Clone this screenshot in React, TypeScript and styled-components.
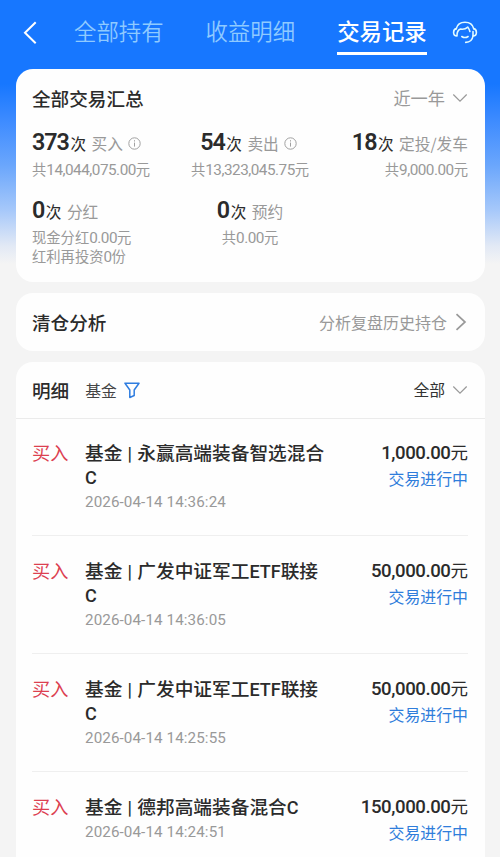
import React from "react";
import styled, { createGlobalStyle } from "styled-components";

const GlobalStyle = createGlobalStyle`
  * { box-sizing: border-box; }
  body { margin: 0; background: #f4f4f4; font-family: "Noto Sans CJK SC", sans-serif; color: #2b2b2b; }
`;

const Page = styled.div`
  width: 500px;
  height: 857px;
  overflow: hidden;
  display: flex;
  flex-direction: column;
  background: linear-gradient(180deg, #1777ff 0, #1777ff 84px, #3f8cff 122px, #6aa6fc 165px, #a6c8fa 210px, #e2e9f5 246px, #f4f4f4 264px, #f4f4f4 100%);
`;

const TopBar = styled.header`
  height: 69px;
  flex: none;
  display: flex;
  align-items: flex-start;
  padding: 13px 0 0 23px;
  svg { flex: none; }
`;

const BackIcon = styled.svg`
  width: 14px;
  height: 24px;
  margin-top: 8px;
`;

const Tabs = styled.nav`
  display: flex;
  margin-left: 37px;
  gap: 41.6px;
`;

const Tab = styled.div<{ $active?: boolean }>`
  width: 90px;
  height: 42px;
  font-size: 22.4px;
  line-height: 34px;
  white-space: nowrap;
  font-weight: ${(p) => (p.$active ? 500 : 350)};
  color: ${(p) => (p.$active ? "#fff" : "#8fcaff")};
  border-bottom: 3px solid ${(p) => (p.$active ? "#fff" : "transparent")};
`;

const ServiceIcon = styled.svg`
  width: 26px;
  height: 26px;
  margin: 6px 0 0 25px;
`;

const Card = styled.section<{ $h?: number }>`
  width: 469px;
  height: ${(p) => (p.$h ? `${p.$h}px` : "auto")};
  flex: none;
  margin: 0 0 11px 16px;
  border-radius: 17px;
  background: #fefefe;
`;

const CardHead = styled.div<{ $h: number }>`
  height: ${(p) => p.$h}px;
  padding: 0 17px 0 16px;
  display: flex;
  align-items: center;
`;

const Title = styled.h2`
  margin: 0;
  font-size: 18.6px;
  line-height: 28px;
  font-weight: 500;
`;

const HeadLink = styled.div<{ $dark?: boolean; $size: number }>`
  margin-left: auto;
  display: flex;
  align-items: center;
  gap: 7px;
  font-size: ${(p) => p.$size}px;
  line-height: 24px;
  color: ${(p) => (p.$dark ? "#333" : "#999")};
`;

const StatGrid = styled.div`
  display: grid;
  grid-template-columns: 145px 146px 145px;
  padding: 0 17px 0 16px;
  row-gap: 15px;
`;

const Stat = styled.div<{ $align: string }>`
  display: flex;
  flex-direction: column;
  align-items: ${(p) => p.$align};
  white-space: nowrap;
`;

const StatLine = styled.div<{ $info?: boolean; $centered?: boolean }>`
  height: 33px;
  line-height: 33px;
  display: flex;
  align-items: baseline;
  margin-right: ${(p) => (p.$info && p.$centered ? "3px" : "0")};
`;

const Count = styled.span`
  font: 600 23.3px/33px Roboto, sans-serif;
  letter-spacing: -1px;
  margin-right: 1.5px;
`;

const Unit = styled.span`
  font-size: 15.6px;
`;

const StatName = styled.span`
  font-size: 15.7px;
  color: #999;
  margin-left: 5.5px;
`;

const Info = styled.svg`
  width: 13px;
  height: 13px;
  margin-left: 5px;
  align-self: center;
  position: relative;
  top: 1px;
`;

const Sub = styled.div`
  font-size: 14.3px;
  line-height: 19.5px;
  color: #999;
`;

const Digits = styled.span`
  font-family: Roboto, sans-serif;
  font-size: 15.3px;
  line-height: 0;
  letter-spacing: -0.5px;
`;

const FilterButton = styled.div`
  display: flex;
  align-items: center;
  gap: 7px;
  margin-left: 16px;
  font-size: 15.8px;
  color: #444;
`;

const List = styled.div`
  border-top: 1px solid #ebebeb;
  padding: 0 17px 0 16px;
`;

const Row = styled.article`
  height: 118px;
  padding-top: 21px;
  display: flex;
  border-bottom: 1px solid #efefef;
  &:first-child {
    height: 117px;
    padding-top: 20px;
  }
`;

const Kind = styled.div`
  width: 53px;
  font-size: 18.2px;
  line-height: 26px;
  color: #dc4050;
`;

const Detail = styled.div`
  width: 270px;
`;

const Name = styled.div`
  font-size: 18.7px;
  line-height: 24px;
  padding-top: 1px;
  font-weight: 500;
  white-space: nowrap;
`;

const Latin = styled.span`
  font-family: Roboto, sans-serif;
  font-size: 18px;
  line-height: 0;
`;

const Bar = styled(Latin)`
  margin: 0 1px;
`;

const Time = styled.div`
  font: 400 15.2px/24px Roboto, sans-serif;
  color: #999;
  padding-top: 2px;
  letter-spacing: 0.1px;
  white-space: nowrap;
`;

const Money = styled.div`
  margin-left: auto;
  text-align: right;
  white-space: nowrap;
`;

const Amount = styled.div`
  font-size: 17.5px;
  line-height: 26px;
`;

const AmountDigits = styled.span`
  font-family: Roboto, sans-serif;
  font-weight: 500;
  font-size: 18.6px;
  line-height: 0;
  letter-spacing: -0.42px;
`;

const Status = styled.div`
  font-size: 15.9px;
  line-height: 26px;
  padding-top: 1px;
  color: #2f7ddb;
`;

const ChevronDown = () => (
  <svg width="16" height="10" viewBox="0 0 16 10" fill="none" stroke="#999" strokeWidth="1.2">
    <path d="M1.3 1.5 8 8.2l6.7-6.7" />
  </svg>
);

const InfoMark = () => (
  <Info viewBox="0 0 13 13" fill="none" stroke="#a0a0a0">
    <circle cx="6.5" cy="6.5" r="5.7" />
    <path d="M6.5 5.6v4M6.5 3.2v1.3" />
  </Info>
);

type StatData = {
  count: string;
  name: string;
  info?: boolean;
  align: string;
  subs: [string, string, string][];
};

const stats: StatData[] = [
  { count: "373", name: "买入", info: true, align: "flex-start", subs: [["共", "14,044,075.00", "元"]] },
  { count: "54", name: "卖出", info: true, align: "center", subs: [["共", "13,323,045.75", "元"]] },
  { count: "18", name: "定投/发车", align: "flex-end", subs: [["共", "9,000.00", "元"]] },
  {
    count: "0",
    name: "分红",
    align: "flex-start",
    subs: [["现金分红", "0.00", "元"], ["红利再投资", "0", "份"]],
  },
  { count: "0", name: "预约", align: "center", subs: [["共", "0.00", "元"]] },
];

const records = [
  { name: "永赢高端装备智选混合", latin: "", tail: "", wrap: true, time: "2026-04-14 14:36:24", amount: "1,000.00" },
  { name: "广发中证军工", latin: "ETF", tail: "联接", wrap: true, time: "2026-04-14 14:36:05", amount: "50,000.00" },
  { name: "广发中证军工", latin: "ETF", tail: "联接", wrap: true, time: "2026-04-14 14:25:55", amount: "50,000.00" },
  { name: "德邦高端装备混合", latin: "", tail: "", wrap: false, time: "2026-04-14 14:24:51", amount: "150,000.00" },
];

export default function App() {
  return (
    <Page>
      <GlobalStyle />
      <TopBar>
        <BackIcon viewBox="0 0 14 24" fill="none" stroke="#fff" strokeWidth="2">
          <path d="M12.7 1.2 2 11.8l10.7 10.4" />
        </BackIcon>
        <Tabs>
          <Tab>全部持有</Tab>
          <Tab>收益明细</Tab>
          <Tab $active>交易记录</Tab>
        </Tabs>
        <ServiceIcon viewBox="0 0 26 26" fill="none" stroke="#e2fbff" strokeWidth="1.6" strokeLinecap="round" strokeLinejoin="round">
          <path d="M4.300 9.600C5.200 5.600 8.600 3.200 13 3.200s7.800 2.400 8.700 6.400" />
          <path d="M4.300 9.600C2.500 10 1.600 11.500 1.600 13.400s.9 3.500 3.400 3.600c-.2-3.600 1.200-6 3.600-6.900 2.700.5 5.200-.2 7.200-2 .9 1.300 1.700 2.500 2.100 4.400" />
          <path d="M21.700 9.600c1.800.4 2.700 1.900 2.700 3.800s-.9 3.500-3.400 3.600v-4.500" />
          <path d="M9.800 17.500c2 1.300 4.300 1.300 6.300 0M21 17c-.6 4-3.200 6.300-7.300 6.400" />
        </ServiceIcon>
      </TopBar>

      <Card $h={213}>
        <CardHead $h={57}>
          <Title>全部交易汇总</Title>
          <HeadLink $size={17.2}>
            近一年
            <ChevronDown />
          </HeadLink>
        </CardHead>
        <StatGrid>
          {stats.map((s, i) => (
            <Stat key={i} $align={s.align}>
              <StatLine $info={s.info} $centered={s.align === "center"}>
                <Count>{s.count}</Count>
                <Unit>次</Unit>
                <StatName>{s.name}</StatName>
                {s.info && <InfoMark />}
              </StatLine>
              {s.subs.map(([before, value, after]) => (
                <Sub key={before}>
                  {before}
                  <Digits>{value}</Digits>
                  {after}
                </Sub>
              ))}
            </Stat>
          ))}
        </StatGrid>
      </Card>

      <Card $h={58}>
        <CardHead $h={58}>
          <Title>清仓分析</Title>
          <HeadLink $size={16}>
            分析复盘历史持仓
            <svg width="14" height="18" viewBox="0 0 14 18" fill="none" stroke="#999" strokeWidth="1.7">
              <path d="M2.5 1.2 11 9l-8.500 7.800" />
            </svg>
          </HeadLink>
        </CardHead>
      </Card>

      <Card>
        <CardHead $h={56}>
          <Title>明细</Title>
          <FilterButton>
            基金
            <svg width="16" height="17" viewBox="0 0 16 17" fill="none" stroke="#2f7de0" strokeWidth="1.5" strokeLinejoin="round">
              <path d="M1 1.2h14L10.2 8v5.500l-4.400 2V8Z" />
            </svg>
          </FilterButton>
          <HeadLink $dark $size={15.8}>
            全部
            <ChevronDown />
          </HeadLink>
        </CardHead>
        <List>
          {records.map((r) => (
            <Row key={r.time}>
              <Kind>买入</Kind>
              <Detail>
                <Name>
                  基金 <Bar>|</Bar> {r.name}
                  {r.latin && <Latin>{r.latin}</Latin>}
                  {r.tail}
                  {r.wrap && <br />}
                  <Latin>C</Latin>
                </Name>
                <Time>{r.time}</Time>
              </Detail>
              <Money>
                <Amount>
                  <AmountDigits>{r.amount}</AmountDigits>元
                </Amount>
                <Status>交易进行中</Status>
              </Money>
            </Row>
          ))}
        </List>
      </Card>
    </Page>
  );
}
